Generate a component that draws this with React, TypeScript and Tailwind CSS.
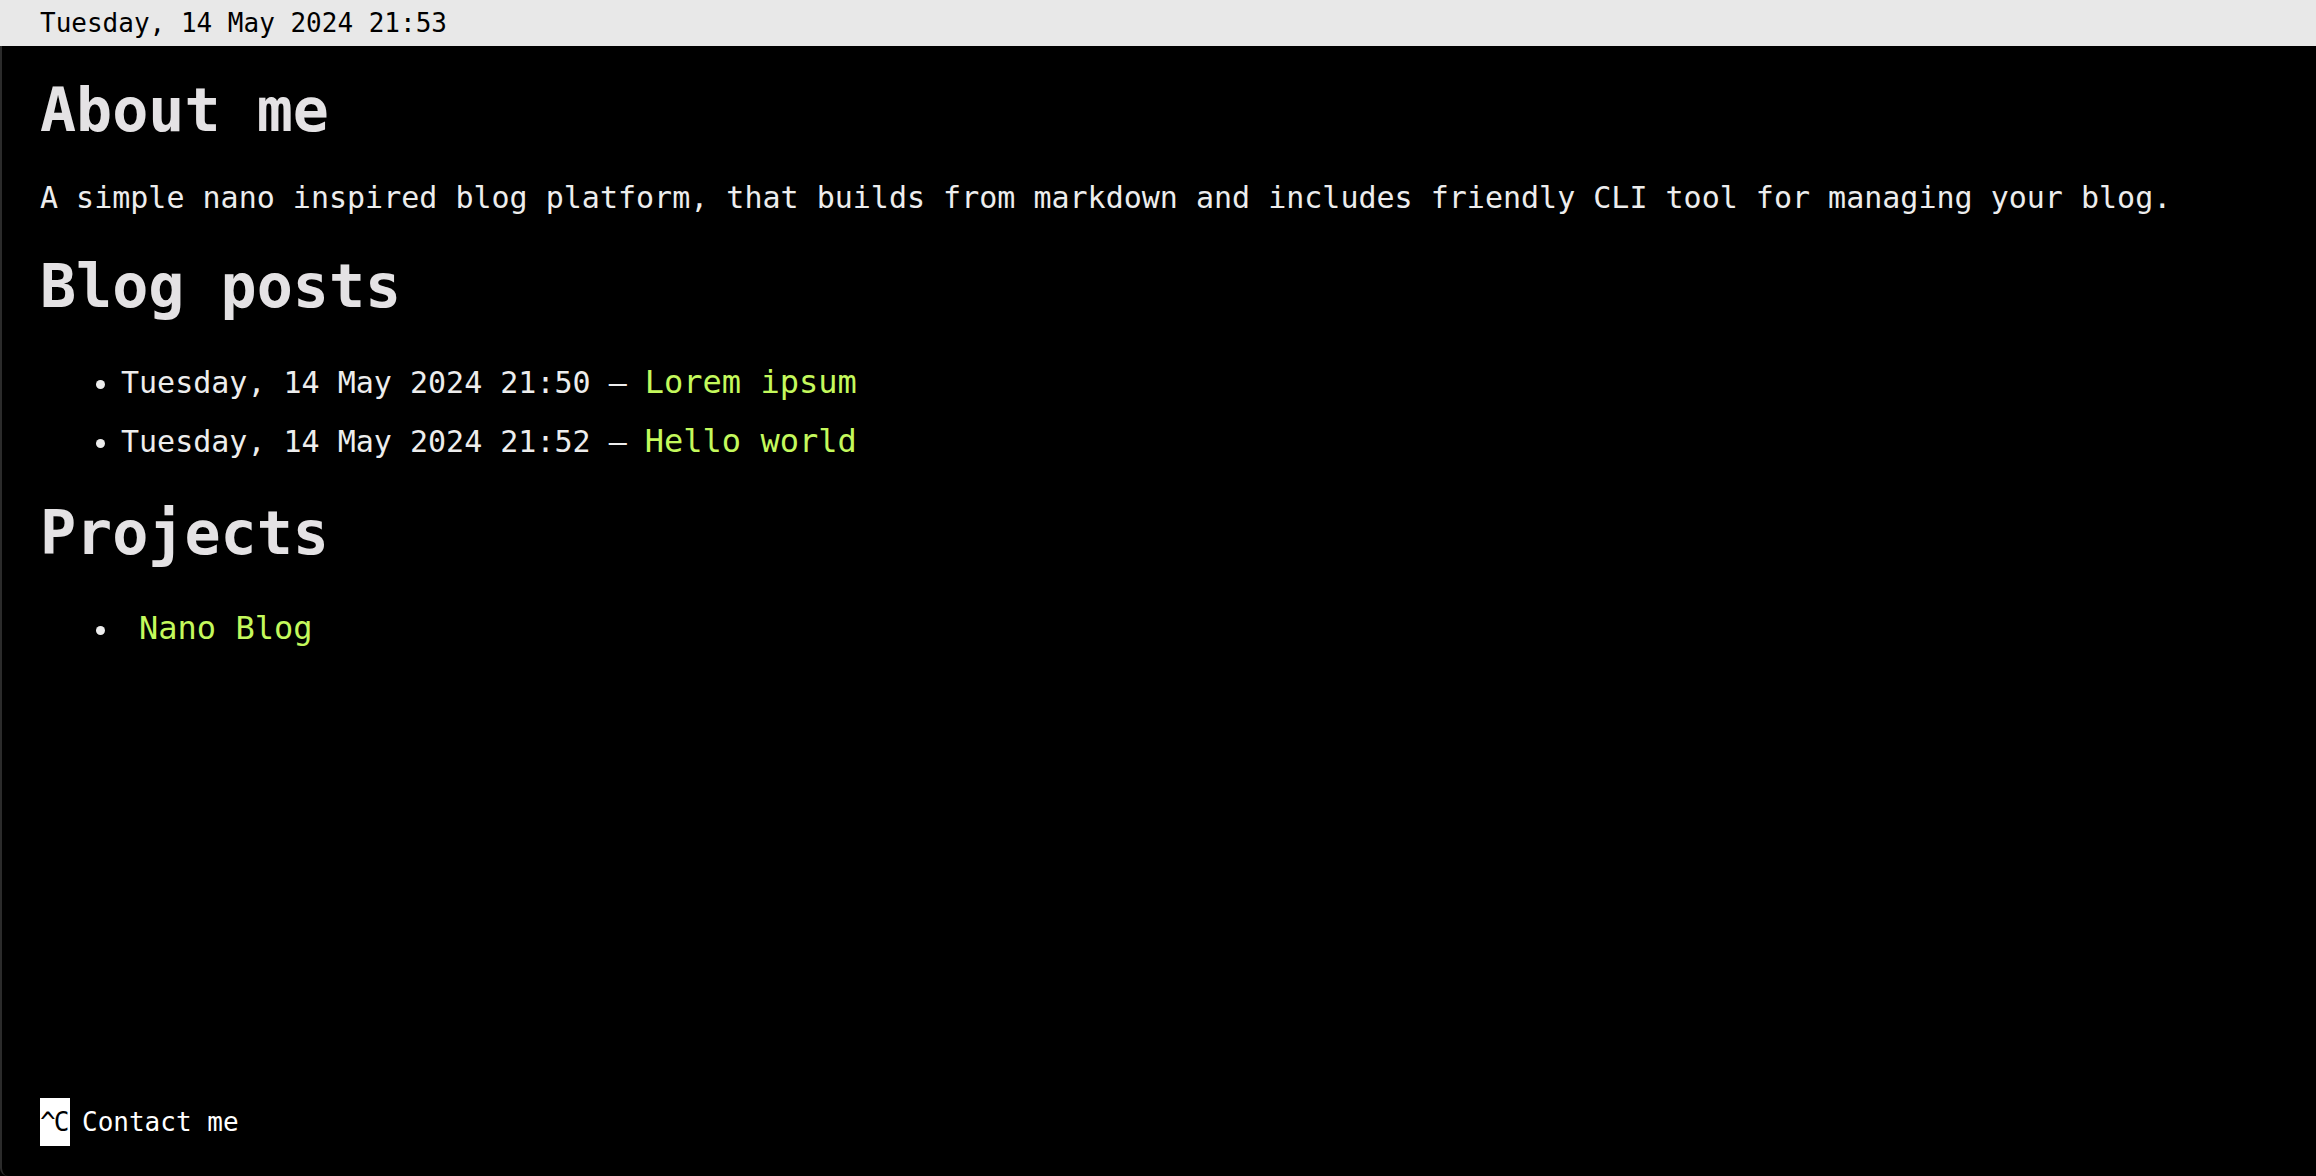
const mono = "font-['DejaVu_Sans_Mono',Menlo,monospace]"

const posts = [
  { date: 'Tuesday, 14 May 2024 21:50', title: 'Lorem ipsum' },
  { date: 'Tuesday, 14 May 2024 21:52', title: 'Hello world' },
]

export default function App() {
  return (
    <div className={`${mono} h-[1176px] w-full flex flex-col bg-black`}>
      {/* top status bar */}
      <div className="h-[46px] shrink-0 bg-[#e8e8e8] px-[40px] flex items-center text-[26px] text-black">
        Tuesday, 14 May 2024 21:53
      </div>

      <div className="flex-1 flex flex-col border-l-2 border-[#2b2b2b] rounded-bl-lg px-[38px] text-[#e4e2e4]">
        <h1 className="text-[60px] font-bold leading-none mt-[34px]">About me</h1>
        <p className="text-[30px] leading-none mt-[43px] text-[#ededed]">
          A simple nano inspired blog platform, that builds from markdown and includes friendly CLI tool for managing your blog.
        </p>

        <h2 className="text-[60px] font-bold leading-none mt-[43px]">Blog posts</h2>
        <ul className="mt-[49px] flex flex-col gap-[24px] pl-[81px] list-disc text-[30px] leading-[34px] text-[#ededed]">
          {posts.map(p => (
            <li key={p.date}>
              {p.date} – <a href="#" className="text-[32px] text-[#c4f95c]">{p.title}</a>
            </li>
          ))}
        </ul>

        <h2 className="text-[60px] font-bold leading-none mt-[44px]">Projects</h2>
        <ul className="mt-[48px] pl-[81px] list-disc text-[30px] leading-[34px] text-[#ededed]">
          <li>
            &nbsp;<a href="#" className="text-[32px] text-[#c4f95c]">Nano Blog</a>
          </li>
        </ul>

        <div className="mt-auto mb-[30px] flex items-center text-[26px] text-white">
          <span className="w-[30px] h-[48px] overflow-hidden bg-white text-black leading-[48px] tracking-[-2px] whitespace-nowrap">^C</span>
          <span className="ml-[12px]">Contact me</span>
        </div>
      </div>
    </div>
  )
}
